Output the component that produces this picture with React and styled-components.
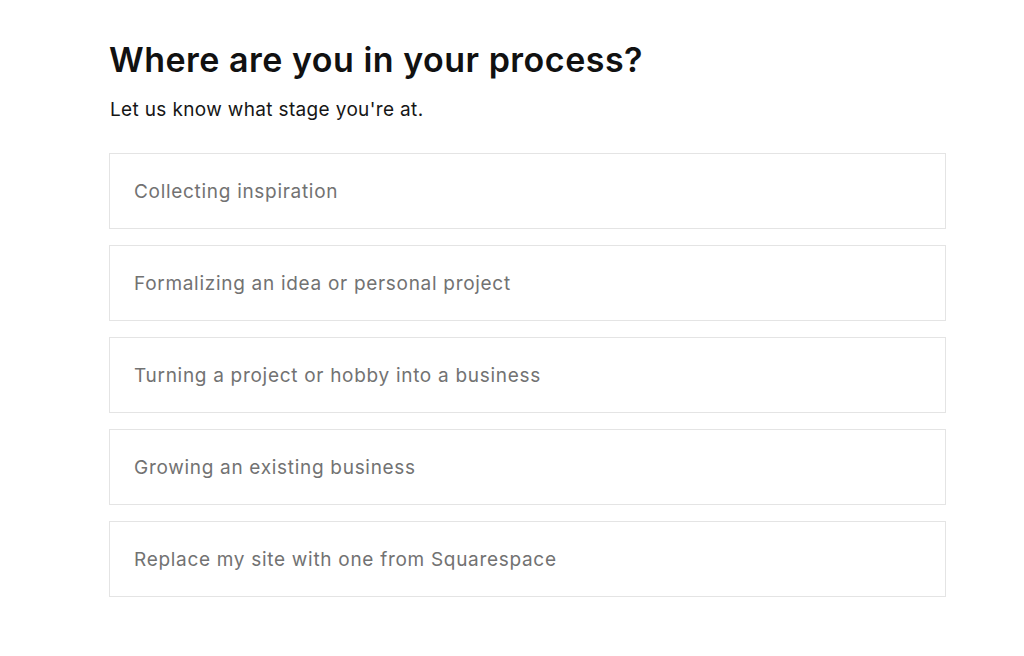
import React from "react";
import styled, { createGlobalStyle } from "styled-components";

const GlobalStyle = createGlobalStyle`
  body {
    margin: 0;
    background: #ffffff;
    font-family: Inter, "Liberation Sans", sans-serif;
  }
`;

const options = [
  "Collecting inspiration",
  "Formalizing an idea or personal project",
  "Turning a project or hobby into a business",
  "Growing an existing business",
  "Replace my site with one from Squarespace",
];

export default function App() {
  return (
    <>
      <GlobalStyle />
      <Page>
        <Title>Where are you in your process?</Title>
        <Subtitle>Let us know what stage you're at.</Subtitle>
        <OptionList>
          {options.map((label) => (
            <Option key={label} type="button">
              {label}
            </Option>
          ))}
        </OptionList>
      </Page>
    </>
  );
}

const Page = styled.main`
  width: 837px;
  margin: 0 0 0 109px;
  padding-top: 38px;
  display: flex;
  flex-direction: column;
`;

const Title = styled.h1`
  margin: 0;
  font-size: 34px;
  line-height: 44px;
  font-weight: 600;
  letter-spacing: 0.5px;
  color: #111111;
`;

const Subtitle = styled.p`
  margin: 16px 0 0 1px;
  font-size: 19px;
  line-height: 24px;
  letter-spacing: 0.35px;
  color: #161616;
`;

const OptionList = styled.div`
  margin-top: 31px;
  display: flex;
  flex-direction: column;
  gap: 16px;
`;

const Option = styled.button`
  height: 76px;
  padding: 0 24px;
  display: flex;
  align-items: center;
  text-align: left;
  background: #ffffff;
  border: 1px solid #e4e4e4;
  border-radius: 0;
  font-family: inherit;
  font-size: 19px;
  letter-spacing: 0.7px;
  color: #727272;
  cursor: pointer;
`;
